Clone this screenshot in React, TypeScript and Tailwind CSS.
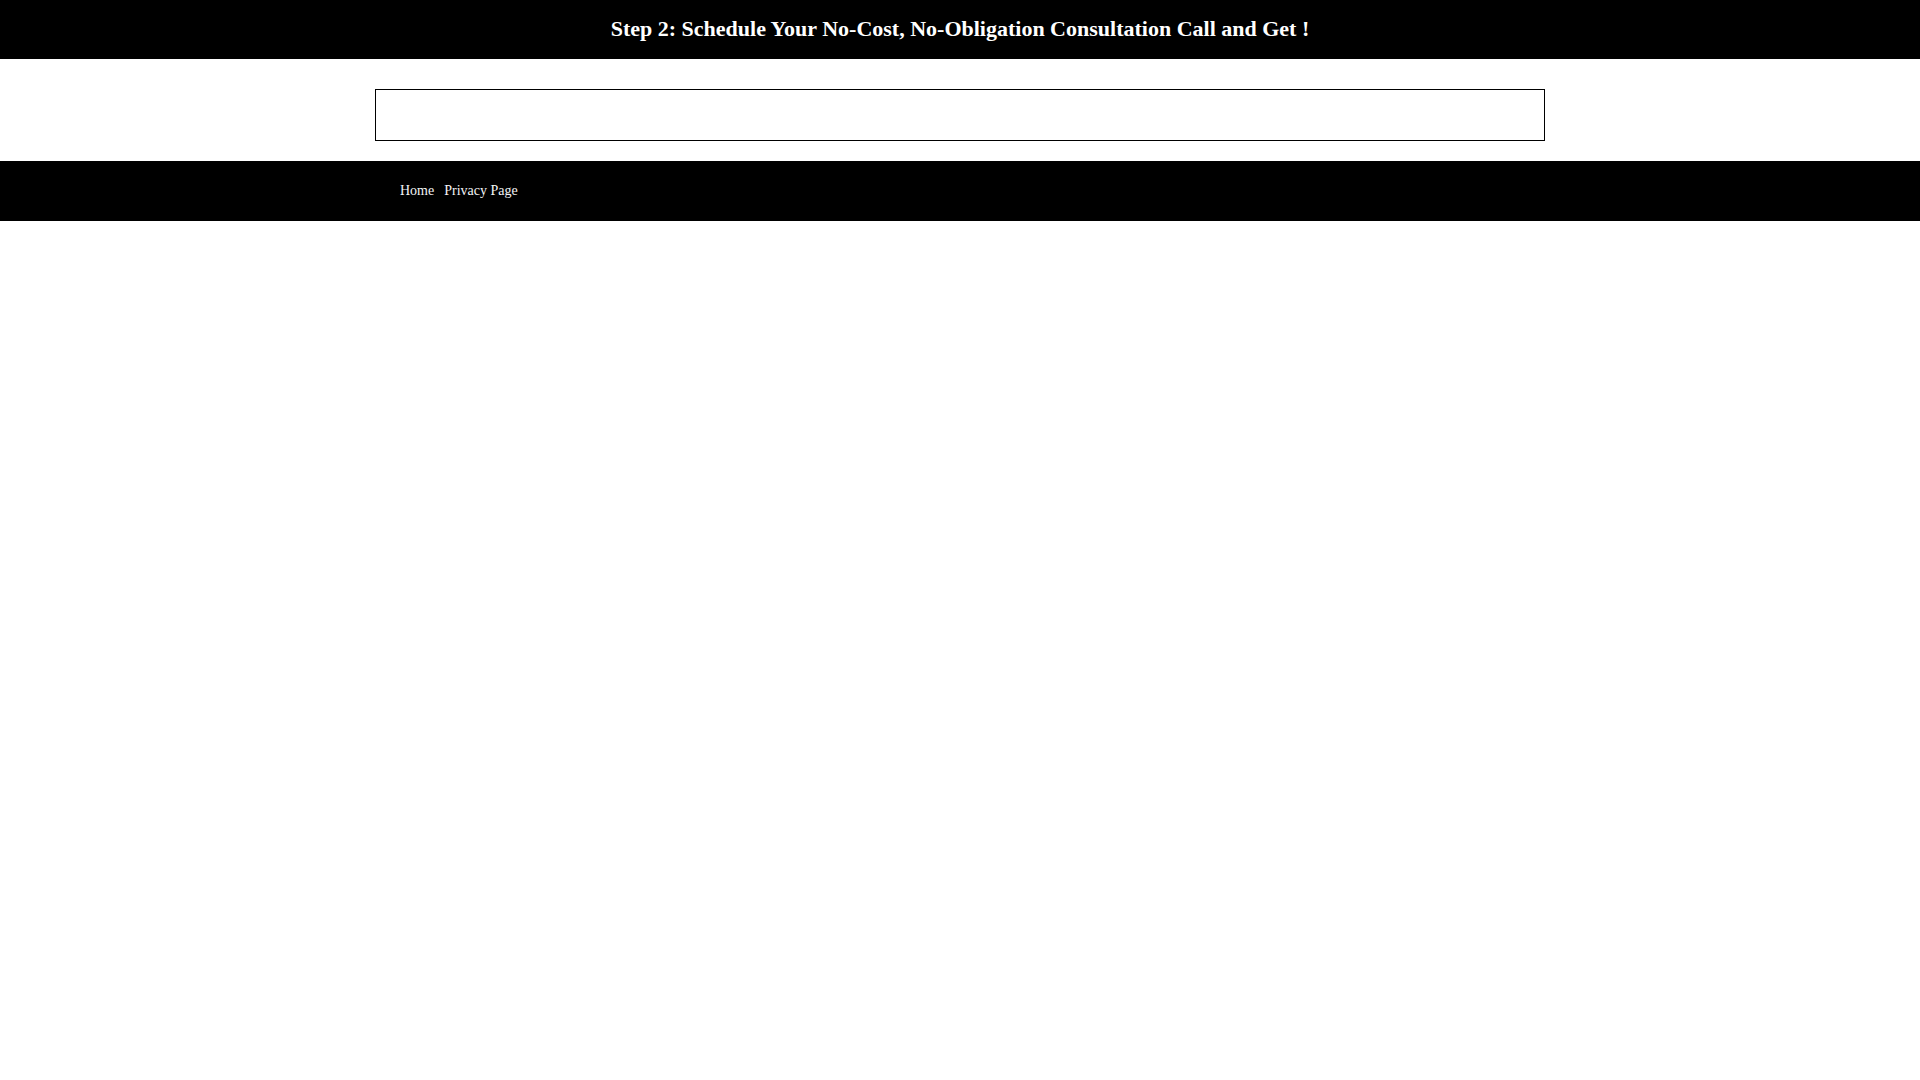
export default function App() {
  return (
    <div className="min-h-screen bg-white font-['Liberation_Serif','Times_New_Roman',serif]">
      {/* Top announcement bar */}
      <div className="flex h-[59px] items-center justify-center bg-black pb-[2px]">
        <h2 className="text-[22px] font-bold leading-none text-white">
          Step 2: Schedule Your No-Cost, No-Obligation Consultation Call and Get !
        </h2>
      </div>

      {/* Empty embed box */}
      <div className="pt-[30px] pb-[20px]">
        <div className="mx-auto h-[52px] w-[1170px] border border-black" />
      </div>

      {/* Nav bar */}
      <nav className="h-[60px] bg-black">
        <div className="mx-auto flex h-full w-[1170px] items-center gap-[10px] px-[25px] pb-[2px] text-[14px] text-gray-100">
          <a href="#">Home</a>
          <a href="#">Privacy Page</a>
        </div>
      </nav>
    </div>
  );
}
